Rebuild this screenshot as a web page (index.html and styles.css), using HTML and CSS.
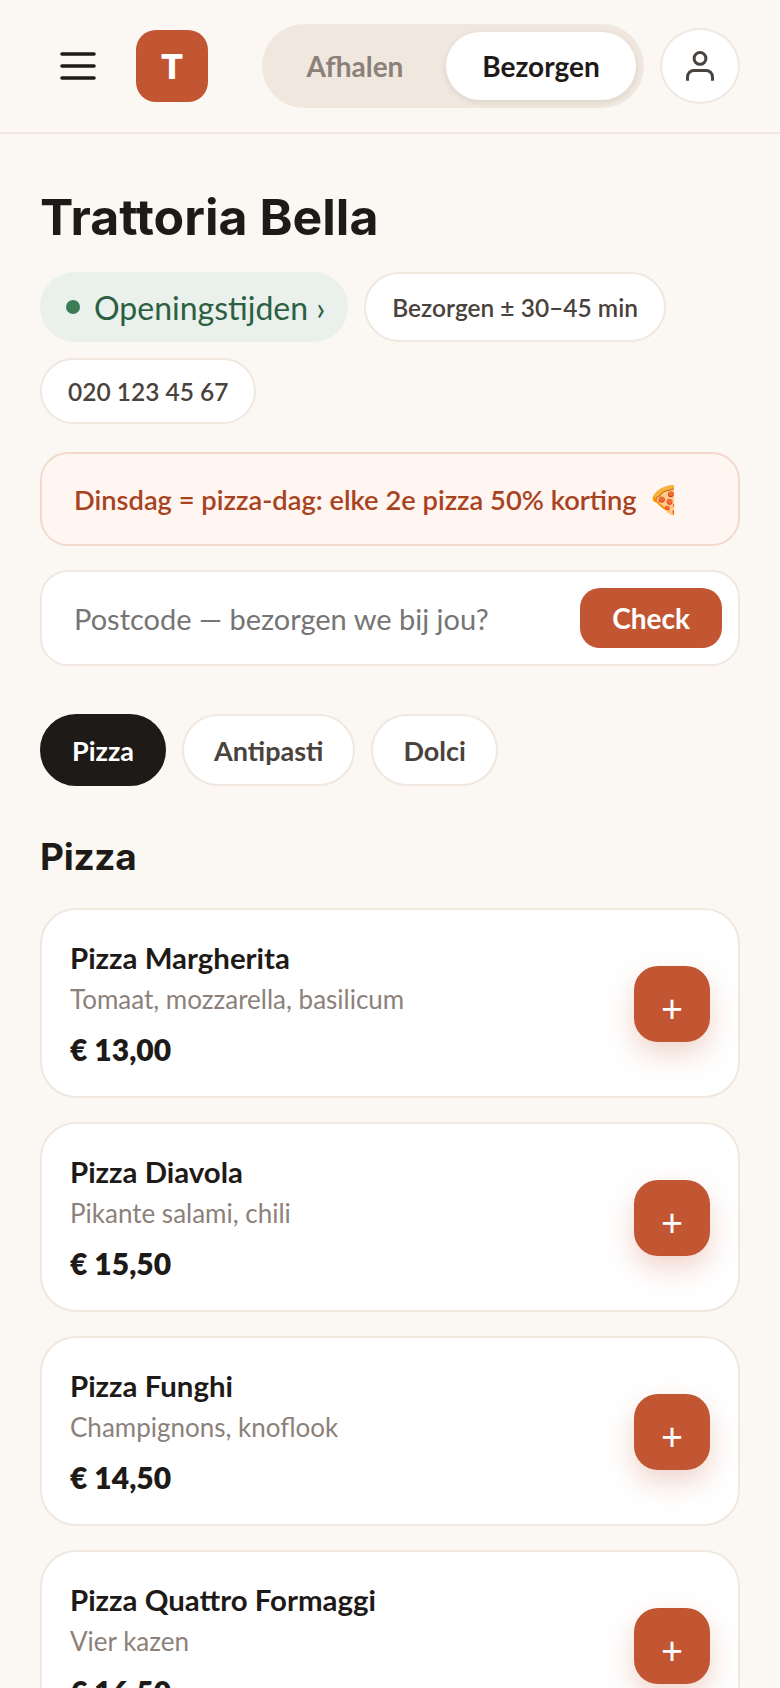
FILE: index.html
```html
<!DOCTYPE html>
<html lang="nl">
<head>
    <meta charset="utf-8">
    <title>Trattoria Bella</title>
    <link rel="stylesheet" href="styles.css">
</head>
<body>
    <header class="topbar">
        <button class="menu_btn" aria-label="Menu">
            <svg width="36" height="28" viewBox="0 0 36 28" fill="none" stroke="#1E1A17" stroke-width="3.6" stroke-linecap="round">
                <path d="M2 2H34M2 14H34M2 26H34" />
            </svg>
        </button>
        <div class="logo">T</div>
        <div class="mode_toggle">
            <span class="mode">Afhalen</span>
            <span class="mode active">Bezorgen</span>
        </div>
        <button class="user_btn" aria-label="Account">
            <svg width="28" height="30" viewBox="0 0 28 30" fill="none" stroke="#4A423C" stroke-width="3">
                <circle cx="14" cy="7.4" r="5.9" />
                <path d="M1.5 29.7V26A6.5 6.5 0 0 1 8 19.5H20A6.5 6.5 0 0 1 26.5 26V29.7" />
            </svg>
        </button>
    </header>

    <main class="content">
        <h1>Trattoria Bella</h1>

        <div class="chips">
            <span class="chip open"><i class="dot"></i>Openingstijden ›</span>
            <span class="chip">Bezorgen ± 30–45 min</span>
            <span class="chip">020 123 45 67</span>
        </div>

        <div class="promo">Dinsdag = pizza-dag: elke 2e pizza 50% korting<span class="emoji">🍕</span></div>

        <form class="postcode">
            <span class="postcode_text">Postcode — bezorgen we bij jou?</span>
            <button class="check_btn" type="button">Check</button>
        </form>

        <nav class="tabs">
            <a class="tab active">Pizza</a>
            <a class="tab">Antipasti</a>
            <a class="tab">Dolci</a>
        </nav>

        <h2>Pizza</h2>

        <div class="items">
            <div class="item">
                <div class="item_info">
                    <h3>Pizza Margherita</h3>
                    <p>Tomaat, mozzarella, basilicum</p>
                    <strong>€ 13,00</strong>
                </div>
                <button class="add_btn" aria-label="Toevoegen">+</button>
            </div>
            <div class="item">
                <div class="item_info">
                    <h3>Pizza Diavola</h3>
                    <p>Pikante salami, chili</p>
                    <strong>€ 15,50</strong>
                </div>
                <button class="add_btn" aria-label="Toevoegen">+</button>
            </div>
            <div class="item">
                <div class="item_info">
                    <h3>Pizza Funghi</h3>
                    <p>Champignons, knoflook</p>
                    <strong>€ 14,50</strong>
                </div>
                <button class="add_btn" aria-label="Toevoegen">+</button>
            </div>
            <div class="item">
                <div class="item_info">
                    <h3>Pizza Quattro Formaggi</h3>
                    <p>Vier kazen</p>
                    <strong>€ 16,50</strong>
                </div>
                <button class="add_btn" aria-label="Toevoegen">+</button>
            </div>
        </div>
    </main>
</body>
</html>
```

FILE: styles.css
```css
* {
    box-sizing: border-box;
}

html, body {
    height: 1688px;
    overflow: hidden;
}

body {
    margin: 0;
    background: #FBF8F3;
    color: #1E1A17;
    font-family: "Lato", "Noto Sans", sans-serif;
}

button {
    font-family: inherit;
    border: 0;
    padding: 0;
    cursor: pointer;
}

/* top bar */
.topbar {
    display: flex;
    align-items: center;
    height: 134px;
    padding: 0 40px 0 60px;
    border-bottom: 2px solid #F0E8DF;
}

.menu_btn {
    display: flex;
    background: none;
    margin-right: 40px;
}

.logo {
    display: flex;
    align-items: center;
    justify-content: center;
    width: 72px;
    height: 72px;
    border-radius: 20px;
    background: #C25633;
    color: #fff;
    font-family: "Inter", sans-serif;
    font-size: 34px;
    font-weight: 800;
}

.mode_toggle {
    display: flex;
    height: 84px;
    width: 382px;
    margin-left: 54px;
    padding: 8px;
    border-radius: 42px;
    background: #F0E8DE;
}

.mode {
    display: flex;
    flex: 1;
    align-items: center;
    justify-content: center;
    padding-right: 6px;
    font-size: 28px;
    font-weight: 700;
    color: #8C817A;
}

.mode.active {
    flex: 0 0 190px;
    padding-right: 0;
    border-radius: 34px;
    background: #fff;
    color: #1E1A17;
    box-shadow: 0 2px 6px rgba(30, 26, 23, .1);
}

.user_btn {
    display: flex;
    align-items: center;
    justify-content: center;
    width: 80px;
    height: 76px;
    margin-left: auto;
    border: 2px solid #F0E8DF;
    border-radius: 50%;
    background: #fff;
}

/* page content */
.content {
    padding: 0 40px;
}

h1 {
    margin: 53px 0 0;
    font-family: "Inter", sans-serif;
    font-size: 50px;
    line-height: 60px;
    font-weight: 700;
}

.chips {
    display: flex;
    flex-wrap: wrap;
    gap: 16px;
    margin-top: 25px;
}

.chip {
    display: flex;
    align-items: center;
    min-height: 66px;
    padding: 0 26px;
    border: 2px solid #F0E8DF;
    border-radius: 35px;
    background: #fff;
    font-size: 24.5px;
    font-weight: 600;
    color: #4A423C;
}

.chip.open {
    height: 70px;
    padding: 0 23px 0 26px;
    border: 0;
    background: #EAF0EB;
    color: #2D5F43;
    font-size: 32px;
    font-weight: 400;
}

.dot {
    width: 14px;
    height: 14px;
    margin-right: 14px;
    border-radius: 50%;
    background: #3A7D57;
}

.promo {
    display: flex;
    align-items: center;
    height: 94px;
    margin-top: 28px;
    padding: 0 32px;
    border: 2px solid #F3D9CC;
    border-radius: 28px;
    background: #FFF5F1;
    color: #A8431F;
    font-size: 27.3px;
    font-weight: 600;
}

.emoji {
    width: 26px;
    margin-left: 11px;
    overflow: hidden;
    white-space: nowrap;
    font-size: 28px;
}

.postcode {
    display: flex;
    align-items: center;
    justify-content: space-between;
    height: 96px;
    margin-top: 24px;
    padding: 0 16px 0 32px;
    border: 2px solid #F0E8DF;
    border-radius: 28px;
    background: #fff;
}

.postcode_text {
    font-size: 29px;
    color: #757575;
}

.check_btn {
    width: 142px;
    height: 60px;
    border-radius: 20px;
    background: #C25633;
    color: #fff;
    font-size: 28px;
    font-weight: 700;
}

.tabs {
    display: flex;
    gap: 16px;
    margin-top: 48px;
}

.tab {
    display: flex;
    align-items: center;
    height: 72px;
    padding: 0 30px;
    border: 2px solid #F0E8DF;
    border-radius: 36px;
    background: #fff;
    font-size: 27px;
    font-weight: 700;
    color: #4A423C;
}

.tab.active {
    border-color: #1E1A17;
    background: #1E1A17;
    color: #fff;
}

h2 {
    margin: 48px 0 0;
    font-family: "Inter", sans-serif;
    font-size: 37px;
    line-height: 46px;
    font-weight: 700;
    letter-spacing: -.3px;
}

.items {
    display: flex;
    flex-direction: column;
    gap: 24px;
    margin-top: 28px;
}

.item {
    display: flex;
    align-items: center;
    justify-content: space-between;
    height: 190px;
    padding: 0 28px;
    border: 2px solid #F0E8DF;
    border-radius: 36px;
    background: #fff;
}

.item_info {
    padding-top: 2px;
}

.item h3 {
    margin: 0;
    font-size: 29.4px;
    line-height: 36px;
    font-weight: 700;
}

.item p {
    margin: 7px 0 0;
    font-size: 26px;
    line-height: 32px;
    color: #8C817A;
}

.item strong {
    display: block;
    margin-top: 14px;
    font-size: 30px;
    line-height: 40px;
    font-weight: 800;
}

.add_btn {
    flex: none;
    width: 76px;
    height: 76px;
    margin-top: 2px;
    padding-top: 6px;
    border-radius: 24px;
    background: #C25633;
    color: #fff;
    font-size: 38px;
    line-height: 70px;
    box-shadow: 0 12px 28px rgba(194, 86, 51, .25);
}
```
